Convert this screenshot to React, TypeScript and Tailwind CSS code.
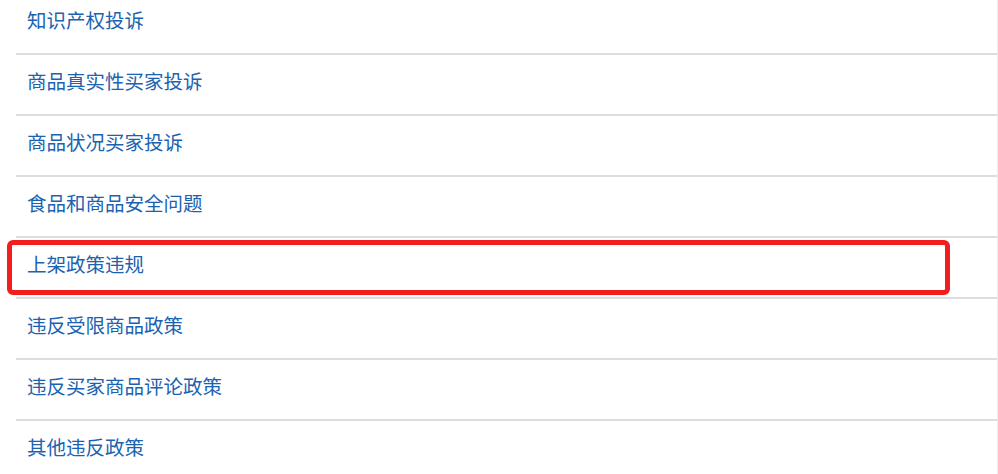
const items = [
  "知识产权投诉",
  "商品真实性买家投诉",
  "商品状况买家投诉",
  "食品和商品安全问题",
  "上架政策违规",
  "违反受限商品政策",
  "违反买家商品评论政策",
  "其他违反政策",
];

export default function App() {
  return (
    <div className="h-[474px] w-[998px] overflow-hidden bg-white pl-4">
      <ul className="-mt-[8px] border-r border-[#ececec]">
        {items.map((label) => (
          <li
            key={label}
            className="relative h-[61px] border-t-2 border-[#dddddd] pl-[11px] pt-[12px]"
          >
            <a
              className="block text-[19.5px] leading-[28px] text-[#1b63b0]"
              style={{ fontFamily: '"Noto Sans CJK SC", "Noto Sans", sans-serif' }}
            >
              {label}
            </a>
            {label === "上架政策违规" && (
              <div className="absolute left-[-9px] top-[2px] h-[55px] w-[943px] rounded-[6px] border-[5px] border-[#f21d1d]" />
            )}
          </li>
        ))}
      </ul>
    </div>
  );
}
